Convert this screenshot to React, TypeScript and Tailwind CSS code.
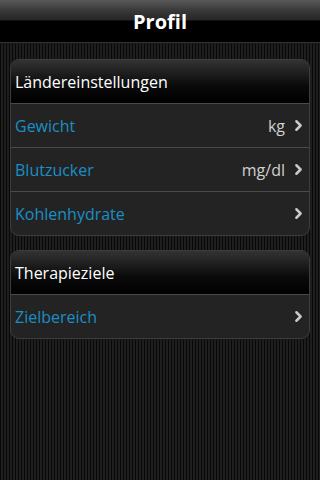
import { ChevronRight } from 'lucide-react'

const font = { fontFamily: '"Open Sans", "DejaVu Sans", sans-serif' }

type Row = { label: string; value?: string }

const sections: { title: string; rows: Row[] }[] = [
  {
    title: 'Ländereinstellungen',
    rows: [
      { label: 'Gewicht', value: 'kg' },
      { label: 'Blutzucker', value: 'mg/dl' },
      { label: 'Kohlenhydrate' },
    ],
  },
  {
    title: 'Therapieziele',
    rows: [{ label: 'Zielbereich' }],
  },
]

export default function App() {
  return (
    <div
      className="w-[320px] h-[480px] overflow-hidden bg-[repeating-linear-gradient(90deg,#090909_0px,#090909_1px,#1e1e1e_1px,#1e1e1e_3px)]"
      style={font}
    >
      {/* Title bar */}
      <div className="h-[42px] flex items-center justify-center bg-[linear-gradient(#595959_0px,#3a3a3a_10px,#262626_20px,#000_21px,#000_42px)]">
        <h1 className="text-white text-[20px] font-bold leading-none mt-[1px]">Profil</h1>
      </div>
      <div className="h-px bg-[#333]" />

      <div className="flex flex-col gap-[14px] px-[10px] pt-[16px]">
        {sections.map((s) => (
          <div
            key={s.title}
            className="rounded-[9px] border border-[#3c3c3c] overflow-hidden bg-[#232323]"
          >
            <div className="h-[43px] flex items-center px-[4px] bg-[linear-gradient(#333333,#0a0a0a_60%,#000)]">
              <span className="text-white text-[16px]">{s.title}</span>
            </div>
            {s.rows.map((r) => (
              <div
                key={r.label}
                className="h-[44px] flex items-center pl-[4px] pr-[2px] border-t border-[#4a4a4a]"
              >
                <span className="text-[#1a8fc6] text-[16px] flex-1">{r.label}</span>
                {r.value && <span className="text-[#d0d0d0] text-[16px] mr-[5px]">{r.value}</span>}
                <ChevronRight size={17} strokeWidth={3.5} className="text-[#c8c8c8]" />
              </div>
            ))}
          </div>
        ))}
      </div>
    </div>
  )
}
